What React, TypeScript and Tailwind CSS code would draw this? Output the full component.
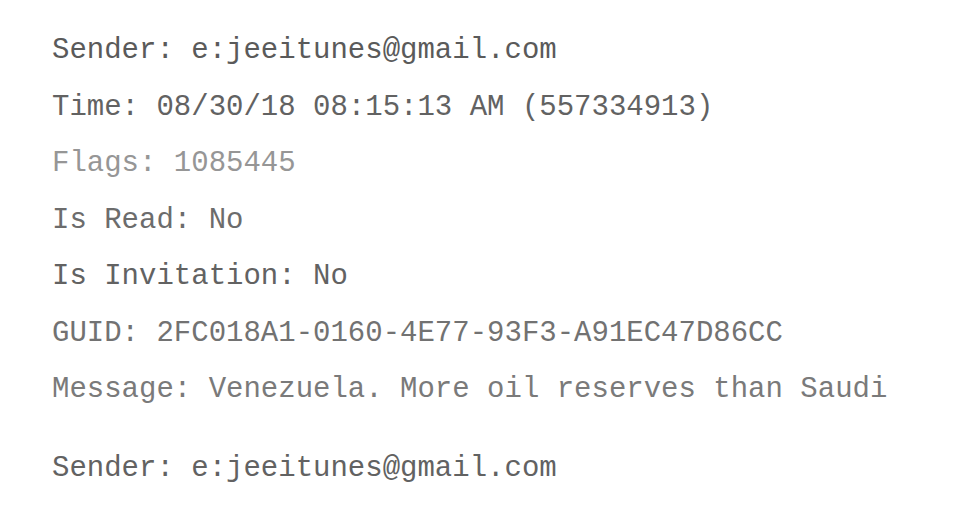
export default function App() {
  const lines: { t: string; c: string }[] = [
    { t: "Sender: e:jeeitunes@gmail.com", c: "text-[#5a5a5a]" },
    { t: "Time: 08/30/18 08:15:13 AM (557334913)", c: "text-[#626262]" },
    { t: "Flags: 1085445", c: "text-[#969696]" },
    { t: "Is Read: No", c: "text-[#6c6c6c]" },
    { t: "Is Invitation: No", c: "text-[#626262]" },
    { t: "GUID: 2FC018A1-0160-4E77-93F3-A91EC47D86CC", c: "text-[#727272]" },
    { t: "Message: Venezuela. More oil reserves than Saudi", c: "text-[#7a7a7a]" },
  ];
  return (
    <div className="w-[974px] h-[528px] bg-white overflow-hidden pl-[52px] pt-[23px] font-['Liberation_Mono','Courier_New',monospace] text-[29px] leading-[56.5px] whitespace-pre">
      {lines.map((l, i) => (
        <div key={i} className={l.c}>
          {l.t}
        </div>
      ))}
      <div className="mt-[22.5px] text-[#626262]">Sender: e:jeeitunes@gmail.com</div>
    </div>
  );
}
